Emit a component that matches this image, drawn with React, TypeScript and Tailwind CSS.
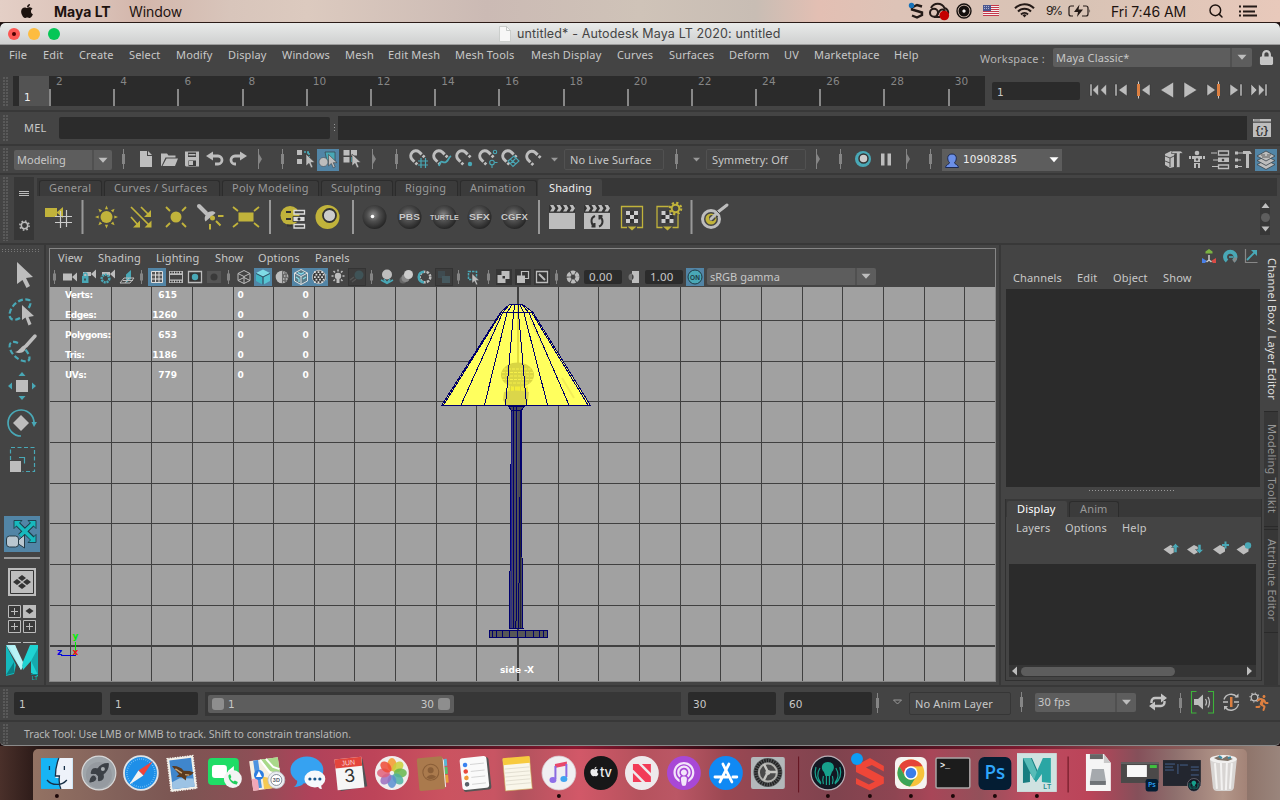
import React from "react";
import { FaApple, FaLock, FaPodcast, FaRunning } from "react-icons/fa";
import { Search, Repeat, Rocket } from "lucide-react";

const G = "#bdbdbd";
const T = "#49a8b6";
const Y = "#c1b33b";

type IcProps = { x: number; w: number; y?: number; h?: number; cls?: string; children?: React.ReactNode };
function Ic({ x, w, y = 0, h = 27, cls = "", children }: IcProps) {
  return (
    <svg className={"shrink-0 " + cls} width={w} height={h} viewBox={`${x} ${y} ${w} ${h}`}>
      {children}
    </svg>
  );
}

/* toolbar icon, origin at its own centre */
function C({ w, h = 27, dx = 0, dy = 0, cls = "", children }: { w: number; h?: number; dx?: number; dy?: number; cls?: string; children?: React.ReactNode }) {
  return (
    <svg className={"shrink-0 " + cls} width={w} height={h} viewBox={`${-w / 2 - dx} ${-h / 2 - dy} ${w} ${h}`}>
      {children}
    </svg>
  );
}

const Bar = ({ x, cy, r = 10 }: { x: number; cy: number; r?: number }) => (
  <g fill="#858585">
    <rect x={x - 0.5} y={cy - r} width={1} height={r * 2} />
    <rect x={x - 1.5} y={cy - r / 2} width={3} height={r} />
  </g>
);
const Fold = ({ x, cy }: { x: number; cy: number }) => (
  <g fill="#858585">
    <rect x={x} y={cy - 10} width={1} height={20} />
    <path d={`M${x + 1} ${cy - 5}l3 5l-3 5z`} />
  </g>
);
const Down = ({ x, y, s = 4.5, c = G }: { x: number; y: number; s?: number; c?: string }) => (
  <path d={`M${x - s} ${y - s / 2}h${s * 2}l${-s} ${s * 1.1}z`} fill={c} />
);
const Cursor = ({ x, y, s = 1 }: { x: number; y: number; s?: number }) => (
  <path transform={`translate(${x} ${y}) scale(${s})`} d="M0 0v12l3-2.6l2 4.6l2-1l-2-4.4h4z" fill={G} stroke="#3a3a3a" strokeWidth={0.6} />
);
const Magnet = ({ x, y }: { x: number; y: number }) => (
  <g transform={`translate(${x + 0.8} ${y + 1}) scale(1.3)`} fill="none" stroke={G} strokeWidth={2.3}>
    <path d="M-3 1.7L-5 -.3A4 4 0 0 1 .6 -5.9L2.6 -3.9" />
    <path d="M-2.2 2.5L-.8 3.9M3.4 -3.1L4.8 -1.7" strokeWidth={2.2} />
  </g>
);
const Grip = ({ cls }: { cls: string }) => (
  <div className={"ml-[3px] w-[6px] shrink-0 bg-[radial-gradient(circle_at_1px_1px,#8a8a8a_0.5px,transparent_0.8px)] bg-[length:3px_3px] " + cls} />
);
const Rule = () => <div className="h-[2px] shrink-0 bg-[#383838]" />;

const menus: [string, string][] = [
  ["File", "w-[34px]"], ["Edit", "w-[36px]"], ["Create", "w-[50px]"], ["Select", "w-[47px]"], ["Modify", "w-[52px]"],
  ["Display", "w-[54px]"], ["Windows", "w-[63px]"], ["Mesh", "w-[43px]"], ["Edit Mesh", "w-[67px]"], ["Mesh Tools", "w-[76px]"],
  ["Mesh Display", "w-[86px]"], ["Curves", "w-[52px]"], ["Surfaces", "w-[60px]"], ["Deform", "w-[55px]"], ["UV", "w-[30px]"],
  ["Marketplace", "w-[80px]"], ["Help", "w-[86px]"],
];

function MacBar() {
  return (
    <div className="flex h-[22px] shrink-0 items-center bg-[linear-gradient(90deg,#e4cfc6_0,#d9c0b6_8%,#d3b6ab_11%,#d8c5bb_18%,#dccabf_24%,#cbbab4_38%,#cfc3b8_50%,#c8bdb4_59%,#e3bfb3_64%,#ddc3b7_70%,#d8c3b5_84%,#e8c9bb_100%)] font-['Inter'] text-[14px] text-[#1d130f]">
      <FaApple className="ml-[20px] w-[14px] shrink-0" size={16} />
      <span className="ml-[20px] w-[75px] text-[14px] font-bold">Maya LT</span>
      <span className="w-[772px] text-[14px] tracking-[-0.1px]">Window</span>
      <Ic x={901} w={72} y={0} h={22}>
        <path d="M922 6.500l-5-1.500l-5 2.500v2l10 3v2.500l-5 2.500l-5-2" fill="none" stroke="#241a17" strokeWidth={2.400} />
        <circle cx={911.500} cy={5.500} r={2.700} fill="#1671b8" />
        <g fill="none" stroke="#241a17" strokeWidth={2}>
          <circle cx={934} cy={12.800} r={4} />
          <path d="M931 8a7.500 7.500 0 0 1 13.500 0a5 5 0 0 1 3.500 6.500M934 17h6M937 15l2.500-4c2.500-3 6-1 5.500 2" />
        </g>
        <circle cx={944.300} cy={15.500} r={4.800} fill="#c40000" />
        <circle cx={964} cy={11} r={7} fill="none" stroke="#15100e" strokeWidth={1.400} />
        <circle cx={964} cy={11} r={3.500} fill="none" stroke="#15100e" strokeWidth={4} />
        <circle cx={964} cy={11} r={1.500} fill="#eee" />
      </Ic>
      <Ic x={973} w={118} y={0} h={22}>
        <rect x={983} y={5} width={16} height={11} fill="#f4eeee" />
        {[5, 7, 9, 11, 13, 15].map((y) => <rect key={y} x={983} y={y} width={16} height={1} fill="#c4384a" />)}
        <rect x={983} y={5} width={8} height={6} fill="#4a5690" />
        <path d="M984 6.500h6M984 8.500h6" stroke="#d6d8e8" strokeWidth={0.7} strokeDasharray="1 1" />
        <g fill="none" stroke="#241a17" strokeWidth={2}>
          <path d="M1015 8.300a13 13 0 0 1 19 0M1018 11.500a9 9 0 0 1 13 0M1021 14.500a5 5 0 0 1 7 0" />
        </g>
        <path d="M1022.500 15.200a3 3 0 0 1 4 0l-2 2.300z" fill="#241a17" />
        <text x={1046} y={15} fontSize={12} fill="#241a17" fontFamily="Inter" textLength={17}>9%</text>
        <path d="M1074 6h-3a2 2 0 0 0-2 2v6a2 2 0 0 0 2 2h2M1083 6h3a2 2 0 0 1 2 2v6a2 2 0 0 1-2 2h-4" fill="none" stroke="#241a17" strokeWidth={1.200} />
        <path d="M1079.500 4.500l-5.500 7.500h4l-1 5l6-7.500h-4.500zM1089.500 9v4q1.300-2 0-4z" fill="#241a17" />
      </Ic>
      <span className="ml-[20px] w-[97px] whitespace-nowrap text-[14px] tracking-[-0.1px]">Fri 7:46 AM</span>
      <Search size={16} className="shrink-0" strokeWidth={2.200} />
      <Ic x={1224} w={40} y={0} h={22}>
        <path d="M1243 6.500h14M1243 11.500h12M1243 15.500h14" stroke="#241a17" strokeWidth={2} />
        <path d="M1239 6.500h2M1239 11.500h2M1239 15.500h2" stroke="#241a17" strokeWidth={2} />
      </Ic>
    </div>
  );
}

function TitleBar() {
  return (
    <div className="flex h-[22px] shrink-0 items-center rounded-t-[5px] border-b border-[#9b9b9b] bg-[linear-gradient(#e9ebea,#cfd0d0)]">
      <Ic x={0} w={497} y={23} h={22}>
        <circle cx={14} cy={34} r={6} fill="#fc5753" /><circle cx={14} cy={34} r={2} fill="#4d0000" />
        <circle cx={34} cy={34} r={6} fill="#fdbc40" />
        <circle cx={54} cy={34} r={6} fill="#05c656" />
      </Ic>
      <Ic x={497} w={20} y={23} h={22}>
        <path d="M499.500 26.500h7l4 4v11h-11z" fill="#f7f7f7" stroke="#c3c6c4" strokeWidth={0.8} />
        <path d="M506.500 26.500v4h4" fill="none" stroke="#b9bcba" strokeWidth={0.8} />
      </Ic>
      <span className="whitespace-nowrap pt-[2px] font-['Inter'] text-[12.5px] tracking-[0.14px] text-[#444]">untitled* - Autodesk Maya LT 2020: untitled</span>
    </div>
  );
}

function MenuRow() {
  return (
    <div className="flex h-[31px] shrink-0 items-start pl-[9px]">
      {menus.map(([m, w]) => (
        <span key={m} className={"shrink-0 whitespace-nowrap pt-[2px] leading-[16px] " + w}>{m}</span>
      ))}
      <span className="mt-[6px] w-[73px] shrink-0 whitespace-nowrap leading-[16px] tracking-[0.2px] text-[#b5b5b5]">Workspace :</span>
      <div className="mt-[3px] flex h-[19px] w-[199px] shrink-0 items-center rounded-[2px] bg-[#5d5d5d] pl-[3px]">
        <span className="w-[174px] pt-[1px]">Maya Classic*</span>
        <div className="h-full w-[2px] bg-[#505050]" />
        <C w={20} h={19}><Down x={0} y={-0.500} /></C>
      </div>
      <FaLock className="ml-[7px] mt-[5px] shrink-0 text-[#c6c6c6]" size={15} />
    </div>
  );
}

const tick = (
  <div className="h-[17px] w-[2px] shrink-0 bg-[#888]" />
);
const tickText = "mb-[17px] ml-[5px] font-['DejaVu_Sans'] text-[10.5px] leading-[16px] text-[#868686]";

function TimeRow() {
  return (
    <div className="flex h-[34px] shrink-0">
      <Grip cls="my-[1px] h-[30px]" />
      <div className="ml-[4px] flex h-[30px] w-[972px] shrink-0 bg-[#2b2b2b]">
        <div className="ml-[6px] flex w-[30px] shrink-0 items-end bg-[#535353] pl-[5px] font-['DejaVu_Sans'] text-[10.5px] text-[#eee]">1</div>
        {[2, 4, 6, 8, 10, 12, 14, 16, 18, 20, 22, 24, 26, 28].map((n) => (
          <div key={n} className="flex w-[64.2px] shrink-0 items-end">
            {tick}
            <span className={tickText}>{n}</span>
          </div>
        ))}
        <div className="flex w-[36px] shrink-0 items-end">
          {tick}
          <span className={tickText}>30</span>
        </div>
      </div>
      <div className="ml-[7px] mt-[6px] flex h-[18px] w-[88px] shrink-0 items-center rounded-[2px] bg-[#2b2b2b] pl-[5px] pt-[3px] font-['DejaVu_Sans'] text-[10.5px]">1</div>
      <Ic x={1080} w={194} y={76} h={30}>
        <g fill={G} stroke="#333" strokeWidth={0.500}>
          <path d="M1090 84h2v12h-2zM1098.500 84v12l-6-6zM1106.500 84v12l-6-6z" />
          <path d="M1115 84h2v12h-2zM1127 84v12l-8.500-6z" />
          <path d="M1150 84v12l-8.500-6z" />
          <path d="M1173.500 82v16l-13-8z" />
          <path d="M1184 82v16l13-8z" />
          <path d="M1207 84v12l8.500-6z" />
          <path d="M1230 84v12l8.500-6zM1240 84h2v12h-2z" />
          <path d="M1251 84v12l6-6zM1258.500 84v12l6-6zM1265 84h2v12h-2z" />
        </g>
        <path d="M1138.500 81.500v17M1218.500 81.500v17" stroke="#ccc" strokeWidth={1} />
        <path d="M1137 84h3v12h-3zM1217 84h3v12h-3z" fill="#dc7f40" />
      </Ic>
    </div>
  );
}

function MelRow() {
  return (
    <div className="flex h-[32px] shrink-0 items-center">
      <Grip cls="h-[27px]" />
      <span className="ml-[15px] w-[35px]">MEL</span>
      <div className="h-[22px] w-[271px] shrink-0 rounded-[2px] bg-[#2b2b2b]" />
      <C w={8} h={22}><path d="M.5-4v8" stroke="#999" strokeDasharray="1 2" /></C>
      <div className="h-[24px] w-[909px] shrink-0 bg-[#2b2b2b]" />
      <Ic x={1247} w={30} y={112} h={32}>
        <path d="M1253 119h18v2.500h-18zM1253 122.800h18V137h-18z" fill={G} />
        <path d="M1254.500 120h5" stroke="#333" strokeDasharray="1 1" />
        <text x={1262} y={133.500} fontSize={10} fontWeight={700} textAnchor="middle" fill="#333" fontFamily="Liberation Mono" textLength={14}>{"{;}"}</text>
      </Ic>
    </div>
  );
}

function StatusRow() {
  const y = 146;
  return (
    <div className="flex h-[27px] shrink-0 items-center">
      <Grip cls="h-[23px]" />
      <div className="ml-[5px] flex h-[20px] w-[98px] shrink-0 items-center rounded-[2px] bg-[#5d5d5d] pl-[3px] pt-[1px]">
        <span className="w-[75px] tracking-normal">Modeling</span>
        <div className="-mt-[1px] h-[20px] w-[2px] bg-[#505050]" />
        <C w={18} h={20}><Down x={0} y={0} /></C>
      </div>
      <Ic x={112} w={24} y={y}><Bar x={123.500} cy={159} /></Ic>
      <Ic x={136} w={20} y={y}><path d="M140 151h7v5h5v11h-12zM148 151l4 4h-4z" fill={G} /></Ic>
      <Ic x={156} w={25} y={y}><path d="M161 166v-12.500h6l1.500 2h7v2h-10l-4 8.500zM162.500 166l4-7.500h11.500l-3 7.500z" fill={G} /></Ic>
      <Ic x={181} w={21} y={y}>
        <path d="M185 151.500h14v15h-13l-1-1z" fill={G} />
        <path d="M188 152.500h8v4.500h-8zM188.500 160.500h7.500v5.500h-7.500z" fill="#3d3d3d" /><path d="M189 161h4v4h-4z" fill={G} /><path d="M188.500 154h7v1.500h-7z" fill={G} />
      </Ic>
      <Ic x={202} w={24} y={y}><path d="M212 156h6a3.500 3.500 0 0 1 0 8h-3" fill="none" stroke={G} strokeWidth={2.800} /><path d="M206 156l7-4.500v9z" fill={G} /></Ic>
      <Ic x={226} w={26} y={y}><path d="M241 156h-6a3.500 3.500 0 0 0 0 8h1" fill="none" stroke={G} strokeWidth={2.800} /><path d="M247 156l-7-4.500v9z" fill={G} /></Ic>
      <Ic x={252} w={42} y={y}><Fold x={258} cy={159} /><Bar x={282.500} cy={159} /></Ic>
      <Ic x={294} w={23} y={y}>
        <path d="M297 150h5v5h-5zM297 159h5v5h-5z" fill={G} /><path d="M304 152h5v5h2M309 153h-3" fill="none" stroke={T} strokeWidth={1.500} strokeDasharray="2 1" /><Cursor x={306} y={154} />
      </Ic>
      <div className="h-[22px] w-[22px] shrink-0 bg-[#5285a6]">
        <Ic x={317} w={22} y={148} h={22}>
          <path d="M325 151h10v9h-8z" fill={T} stroke="#333" strokeWidth={0.600} /><circle cx={323.500} cy={161} r={4.500} fill={G} stroke="#3a4a55" strokeWidth={0.600} /><Cursor x={328.500} y={153.500} s={0.950} />
        </Ic>
      </div>
      <Ic x={339} w={25} y={y}>
        <path d="M343.500 150h6v5.500h-6zM351 150h6v5.500h-6zM343.500 157h6v5.500h-6z" fill={G} /><path d="M351 157h4v5h-4z" fill={T} /><Cursor x={352} y={154} />
      </Ic>
      <Ic x={364} w={44} y={y}><Fold x={372} cy={159} /><Bar x={396.500} cy={159} /></Ic>
      <Ic x={408} w={23} y={y}><Magnet x={417.500} y={158.500} /><path d="M421 158v10M425.500 158v10M418 161h10M418 165h10" stroke={T} strokeWidth={1.200} /></Ic>
      <Ic x={431} w={23} y={y}><Magnet x={440.500} y={158.500} /><path d="M439 166c2-8 4-2 7-4c3-2 2-4 5-6" fill="none" stroke={T} strokeWidth={1.800} /></Ic>
      <Ic x={454} w={22} y={y}><Magnet x={463.500} y={158.500} /><circle cx={470} cy={164} r={2.200} fill={T} /></Ic>
      <Ic x={476} w={24} y={y}><Magnet x={486.500} y={158.500} /><g fill="none" stroke={T} strokeWidth={1.100}><circle cx={495} cy={152} r={1.700} /><circle cx={492} cy={162.500} r={2.300} /><path d="M492 165v3M494.500 162.500h3" /></g></Ic>
      <Ic x={500} w={23} y={y}><Magnet x={509.500} y={158.500} /><path d="M508 161l6-5l5 5l-6 5.500zM510 159l6 5M516 158l-6 6" fill="none" stroke={T} strokeWidth={1.100} /></Ic>
      <Ic x={523} w={41} y={y}><Magnet x={533.500} y={159} /><Down x={554.500} y={159.500} s={3.500} c="#999" /></Ic>
      <div className="flex h-[21px] w-[100px] shrink-0 items-center rounded-[2px] border border-[#515151] pl-[5px] pt-[1px] tracking-[0.1px]">No Live Surface</div>
      <Ic x={664} w={42} y={y}><Bar x={676.500} cy={159} /><Down x={696.500} y={159.500} s={3.500} c="#999" /></Ic>
      <div className="flex h-[21px] w-[100px] shrink-0 items-center rounded-[2px] border border-[#515151] pl-[5px] pt-[1px] tracking-[0.1px]">Symmetry: Off</div>
      <Ic x={806} w={46} y={y}><Fold x={816} cy={159} /><Bar x={840.500} cy={159} /></Ic>
      <Ic x={852} w={23} y={y}><circle cx={863} cy={159} r={8} fill={T} /><circle cx={863.500} cy={158.500} r={4.500} fill="#ccc" stroke="#333" strokeWidth={1.500} /></Ic>
      <Ic x={875} w={24} y={y}><path d="M881 153.500h3.500v12h-3.500zM887.500 153.500h3.500v12h-3.500z" fill={G} /></Ic>
      <Ic x={899} w={43} y={y}><Fold x={906} cy={159} /><Bar x={930.500} cy={159} /></Ic>
      <div className="flex h-[22px] w-[120px] shrink-0 items-center bg-[#5d5d5d]">
        <C w={20} h={22}>
          <path d="M-6.500 7.500c0-3 4-3 4-5c-2.500-2-3-8.500 2.500-8.500s5 6.500 2.500 8.500c0 2 4 2 4 5z" fill="#6b8fe8" stroke="#1c2a52" strokeWidth={1} />
        </C>
        <span className="w-[82px] pl-[1px] font-['DejaVu_Sans'] text-[10.5px] tracking-[0.1px] text-[#eee]">10908285</span>
        <C w={18} h={22} dx={1}><Down x={0} y={-0.500} c="#fff" /></C>
      </div>
      <Ic x={1062} w={124} y={y}>
        <path d="M1165 154l6-3h6l-3 4v12l-4 1l-5-3z" fill={G} /><path d="M1165 156l5 2v9M1170 158l4-2M1165 161l5 2" fill="none" stroke="#444" strokeWidth={0.900} />
        <path d="M1172 151h9l2 2.500h-3v14h-3.500v-14h-5z" fill={G} stroke="#444" strokeWidth={0.700} />
      </Ic>
      <Ic x={1186} w={23} y={y}>
        <circle cx={1197} cy={153} r={2.300} fill={G} /><path d="M1189 156h16v3h-5v9h-2v-4h-2v4h-2v-9h-5z" fill={G} /><path d="M1191.500 156v3M1202.500 156v3M1194 162.500h6" stroke="#444" /><circle cx={1197} cy={159.500} r={1.200} fill="#444" />
      </Ic>
      <Ic x={1209} w={23} y={y}>
        <path d="M1211 153h6M1213 160h5M1212 166.500h6" stroke={G} strokeWidth={1.200} /><path d="M1218.500 151h10v4h-10zM1218.500 165h10v3.500h-10z" fill="none" stroke={G} strokeWidth={1.300} /><path d="M1218 157.500h11v4.500h-11z" fill={G} /><circle cx={1223} cy={160} r={1.300} fill="#444" />
      </Ic>
      <Ic x={1232} w={23} y={y}>
        <path d="M1237 153h6M1237 160h4M1237 166.500h5" stroke={G} strokeWidth={1.200} /><path d="M1235 151.500h3v3h-3zM1235 158.500h3v3h-3zM1235 165h3v3h-3z" fill={G} /><path d="M1243 151h7l2 3h-3v14h-3v-14h-3z" fill={G} />
      </Ic>
      <div className="mt-[1px] h-[22px] w-[22px] shrink-0 bg-[#5285a6]">
        <Ic x={1255} w={22} y={149} h={22}>
          <g fill={G} stroke="#38424a" strokeWidth={0.800}>
            <path d="M1266 160l9 4.500l-9 5l-9-5z" /><path d="M1266 156l9 4.500l-9 5l-9-5z" /><path d="M1266 151l9 5l-9 5l-9-5z" />
          </g>
          <path d="M1261 155h4M1267 155h4M1262 157h8" stroke="#444" strokeWidth={0.800} />
        </Ic>
      </div>
    </div>
  );
}

const tabs: [string, string][] = [
  ["General", "ml-[2px] w-[63px] pl-[9px]"], ["Curves / Surfaces", "ml-[2px] w-[116px] pl-[9px]"], ["Poly Modeling", "ml-[2px] w-[97px] pl-[9px]"],
  ["Sculpting", "ml-[2px] w-[72px] pl-[9px]"], ["Rigging", "ml-[2px] w-[63px] pl-[9px]"], ["Animation", "ml-[2px] w-[77px] pl-[9px]"],
];

const Sphere = ({ label, size = 9.500, len = 21 }: { label?: string; size?: number; len?: number }) => (
  <C w={35} h={44} dx={-1}>
    <defs>
      <radialGradient id="ball" cx="0.45" cy="0.42" r="0.6">
        <stop offset="0" stopColor="#8a8a8a" /><stop offset="0.45" stopColor="#4e4e4e" /><stop offset="1" stopColor="#232323" />
      </radialGradient>
    </defs>
    <circle r={12} cy={0} fill="url(#ball)" />
    {label ? (
      <text x={0} y={3} textAnchor="middle" fontSize={size} textLength={len} lengthAdjust="spacingAndGlyphs" fontWeight={700} fontFamily="Liberation Sans" fill="#c9c9c9" stroke="#333" strokeWidth={0.300} paintOrder="stroke">{label}</text>
    ) : (
      <circle cx={-2} cy={-0.500} r={1.800} fill="#fff" />
    )}
  </C>
);
const ShelfBar = ({ w }: { w: number }) => <C w={w} h={44}><rect x={-1} y={-17} width={2} height={34} fill="#999" /></C>;
const Clap = ({ loop = false }: { loop?: boolean }) => (
  <C w={35} h={44} dx={-0.500}>
    <path d="M-13-4h26v16h-26z" fill={G} />
    <path d="M-13-12h26v7h-26z" fill="#333" />
    {[-12, -5.500, 1, 7.500].map((a) => <path key={a} d={`M${a}-12h3.500l2 3.200l-2 3.200h-3.500l2-3.200z`} fill={G} />)}
    {loop && <path d="M-2-1c-5 2-4 8-1 10M-5.500 9.500h3v-3.500M2 9.500c5-2 4-8 1-10M5.500-1h-3v3.500" fill="none" stroke="#333" strokeWidth={2} />}
  </C>
);
const Checker = ({ w, gear = false }: { w: number; gear?: boolean }) => (
  <C w={w} h={44} dx={-0.500}>
    <path d="M-5 10.500h-5.500v-21h21v21h-5.500" fill="none" stroke={Y} strokeWidth={1.300} />
    <path d="M-6-6h12v12h-12z" fill="#333" />
    <path d="M-6-6h4v4h-4zM2-6h4v4h-4zM-2-2h4v4h-4zM-6 2h4v4h-4zM2 2h4v4h-4z" fill="#ccc" />
    <path d="M-4.500 9.500h9l-4.500 4z" fill={Y} />
    {gear && (
      <g>
        <circle cx={8} cy={-8.500} r={7} fill="#444" /><circle cx={8} cy={-8.500} r={5.600} fill="none" stroke={Y} strokeWidth={2.400} strokeDasharray="2.200 2.200" />
        <circle cx={8} cy={-8.500} r={3.800} fill="#444" stroke={Y} strokeWidth={2} />
      </g>
    )}
  </C>
);
const rays = [0, 45, 90, 135, 180, 225, 270, 315];

function Shelf() {
  return (
    <div className="flex h-[68px] shrink-0">
      <Grip cls="mt-[2px] h-[64px]" />
      <div className="ml-[5px] mt-[2px] h-[63px] w-[20px] shrink-0 bg-[#373737]">
        <Ic x={14} w={20} y={177} h={63}>
          <path d="M19 191.500h10M19 193.500h10M19 195.500h10" stroke="#bbb" strokeWidth={1} />
          <circle cx={24.500} cy={225.500} r={3.200} fill="none" stroke="#bbb" strokeWidth={1.500} />
          <circle cx={24.500} cy={225.500} r={4.600} fill="none" stroke="#bbb" strokeWidth={1.600} strokeDasharray="1.600 2" />
        </Ic>
      </div>
      <div className="ml-[3px] flex w-[1240px] shrink-0 flex-col pt-[3px]">
        <div className="flex h-[18px] items-end bg-[#373737] tracking-[0.25px] text-[#999]">
          {tabs.map(([t, c]) => (
            <div key={t} className={"h-[16px] shrink-0 whitespace-nowrap rounded-t-[3px] border border-b-0 border-[#2c2c2c] bg-[#3b3b3b] leading-[14px] " + c}>{t}</div>
          ))}
          <div className="ml-[1px] h-[17px] w-[64px] shrink-0 rounded-t-[2px] bg-[#444] pl-[11px] leading-[17px] tracking-[0.1px] text-[#eee]">Shading</div>
        </div>
        <div className="-mt-[1px] flex h-[44px]">
          <Ic x={37} w={35} y={195} h={44}>
            <path d="M45 208h12v9h-12zM57 212l6-5v11l-6-5z" fill={Y} />
            <path d="M60.500 211v17M66.500 210v17M55 216.500h17M55 222.500h17" stroke="#ccc" strokeWidth={1.200} />
          </Ic>
          <ShelfBar w={21} />
          <C w={27} h={44}><circle r={6} fill={Y} cy={0} />{rays.map((a) => <path key={a} transform={`rotate(${a})`} d="M-1.600-7.800h3.200L0-11.500z" fill={Y} />)}</C>
          <C w={35} h={44}><g transform="translate(3.500 0)"><path d="M0-10L8-2M-10-10L9 9M-10 0L-3 8" stroke={Y} strokeWidth={1.700} /><path d="M10-7v7h-7zM10.500 3.500v7h-7zM-1 3.500v7h-7z" fill={Y} /></g></C>
          <C w={35} h={44}><g transform="translate(3.500 0)"><circle r={5.500} fill={Y} /><path d="M-10-10l4 4M10-10l-4 4M-10 10l4-4M10 10l-4-4" stroke={Y} strokeWidth={1.800} /></g></C>
          <C w={35} h={44}><g transform="translate(2.500 0)"><path d="M-11-11l7 7" stroke={G} strokeWidth={4} strokeLinecap="round" /><path d="M-4.500 4.500c-2-3 0-8 3-9.500s6-1 7 1z" fill={G} /><circle cx={2.500} cy={1} r={2.500} fill={Y} /><path d="M8-1h5.500M6 4l4.500 4.500M0 7v5.500" stroke={Y} strokeWidth={2} /></g></C>
          <C w={35} h={44}><g transform="translate(3.500 0)"><path d="M-7.500-4.500h15v9h-15z" fill={Y} /><path d="M-13-10l5 4M13-10l-5 4M-13 10l5-4M13 10l-5-4" stroke={Y} strokeWidth={1.800} /></g></C>
          <ShelfBar w={20} />
          <C w={26} h={44}><circle cx={-3} cy={-1.500} r={9.500} fill={Y} /><path d="M-7-5h5M-7 2h5M-6 8.500h5" stroke="#333" strokeWidth={2} /><path d="M1-6.500h10.500v3.500h-10.500zM1 7.500h10.500v3.500h-10.500z" fill="#444" stroke="#ddd" strokeWidth={1.300} /><path d="M0-.5h12v5h-12z" fill="#ddd" stroke="#333" strokeWidth={0.800} /><circle cx={6} cy={2} r={1.500} fill="#333" /></C>
          <C w={42} h={44}><circle r={12} cx={0.500} fill={Y} /><circle cx={2.500} cy={-1.500} r={6.500} fill="#ccc" stroke="#333" strokeWidth={1.800} /></C>
          <ShelfBar w={10} />
          <Sphere /><Sphere label="PBS" /><Sphere label="TURTLE" size={8} len={29} /><Sphere label="SFX" /><Sphere label="CGFX" len={27} />
          <ShelfBar w={12} />
          <Clap /><Clap loop />
          <Checker w={35} /><Checker w={36} gear />
          <ShelfBar w={11} />
          <C w={36} h={44} dx={-1}>
            <circle cx={-3} cy={2} r={10} fill={G} /><circle cx={-3} cy={2} r={7} fill="#444" /><circle cx={-3} cy={2} r={5.500} fill={Y} /><circle cx={-2} cy={1} r={3} fill="#444" /><path d="M-3 2L4-5L13-12" stroke={G} strokeWidth={3} strokeLinecap="round" /><path d="M3-6l3 3M-2 4l6-5" stroke="#444" strokeWidth={1} />
          </C>
          <Ic x={733} w={537} y={195} h={44}>
            <path d="M1260 200h10v35h-10z" fill="#373737" /><path d="M1261.500 208l4-5l4 5zM1261.500 226.500l4 5l4-5z" fill={G} /><circle cx={1265.500} cy={217.500} r={4.500} fill="#5d5d5d" />
          </Ic>
        </div>
      </div>
    </div>
  );
}

function Tools() {
  return (
    <div className="flex w-[44px] shrink-0 flex-col">
      <Ic x={0} w={44} y={245} h={12}><path d="M2 249.500h38M2 251.500h38" stroke="#777" strokeDasharray="1 2" /></Ic>
      <Ic x={0} w={44} y={257} h={36}><path d="M17 262v22l5.500-4l4 8l3.500-2l-4-8l7-1z" fill={G} /></Ic>
      <Ic x={0} w={44} y={293} h={37}>
        <path d="M20 318c-7 4-12 1-10-6c2-8 12-15 19-12c3 2 1 6-1 9" fill="none" stroke={T} strokeWidth={2.200} strokeDasharray="5 2.500" /><path d="M22 305v15l3.500-2.500l3 8l3-1.500l-3-7l5.500-1z" fill={G} />
      </Ic>
      <Ic x={0} w={44} y={330} h={37}>
        <path d="M18 343c-6-3-10 0-8 6c3 8 12 14 18 12c4-3-1-10-4-13" fill="none" stroke={T} strokeWidth={2.200} strokeDasharray="5 2.500" /><path d="M35 336l-9 10" stroke={G} strokeWidth={3.500} strokeLinecap="round" /><path d="M26 345c1 6-5 10-11 7c5-1 6-7 11-7z" fill={G} />
      </Ic>
      <Ic x={0} w={44} y={367} h={37}>
        <path d="M16 380h12v12h-12z" fill={G} /><path d="M18.500 376h7l-3.500-4zM18.500 396h7l-3.500 4zM12 382.500v7l-4-3.500zM32 382.500v7l4-3.500z" fill={T} />
      </Ic>
      <Ic x={0} w={44} y={404} h={38}>
        <path d="M21 436a13 13 0 1 1 13-12" fill="none" stroke={T} strokeWidth={1.700} /><path d="M31.500 422h5.500l-3 5z" fill={T} /><path d="M21 415l8 8l-8 8l-8-8z" fill={G} />
      </Ic>
      <Ic x={0} w={44} y={442} h={74}>
        <path d="M10.500 460v-12.500h24v24h-12" fill="none" stroke={T} strokeWidth={1.200} strokeDasharray="4 2.500" /><path d="M10 461h11v11h-11z" fill={G} /><path d="M19 457.500h5.500v6" fill="none" stroke={T} strokeWidth={1.200} />
      </Ic>
      <div className="ml-[4px] h-[36px] w-[36px] shrink-0 bg-[#5285a6]">
        <Ic x={4} w={36} y={516} h={36}>
          <path d="M17.500 524l15 14.500M32.500 524L20 536" stroke="#1d3c48" strokeWidth={5.500} />
          <path d="M14 520.500h8l-8 8zM36 520.500h-8l8 8zM36 542.500v-8l-8 8z" fill="#17b9bd" stroke="#1d3c48" strokeWidth={0.900} />
          <path d="M16.500 523l16.500 16.500M33.500 523L20 536" stroke="#17b9bd" strokeWidth={3.600} />
          <rect x={6.500} y={536} width={12} height={11} rx={3} fill="#b9c7d0" stroke="#263c48" /><path d="M18.500 540l6-5v13l-6-4z" fill="#b9c7d0" stroke="#263c48" />
        </Ic>
      </div>
      <div className="ml-[4px] mt-[5px] h-[2px] w-[36px] shrink-0 bg-[#9a9a9a]" />
      <Ic x={0} w={44} y={559} h={43}>
        <path d="M8 568h28v28h-28z" fill={G} /><path d="M10.500 570.500h23v23h-23z" fill={G} stroke="#333" />
        <path d="M22 575l4 3l-4 3l-4-3zM22 583l4 3l-4 3l-4-3zM17 579l4 3l-4 3l-4-3zM27 579l4 3l-4 3l-4-3z" fill="#333" />
      </Ic>
      <Ic x={0} w={44} y={602} h={43}>
        <g fill="#3a3a3a" stroke="#bbb"><path d="M8.500 605.500h12v12h-12zM8.500 620.500h12v12h-12zM23.500 620.500h12v12h-12z" /><path d="M11 611.500h7M14.500 608v7M11 626.500h7M14.500 623v7M26 626.500h7M29.500 623v7M8 642.500h13M23 642.500h13" /></g>
        <path d="M23 605h13v13h-13z" fill={G} /><path d="M29.500 608l4 3l-4 3l-4-3z" fill="#333" />
      </Ic>
      <Ic x={0} w={44} y={645} h={38}>
        <path d="M6 645h9l8 22l-2 3z" fill="#9fe9f0" /><path d="M6 645l10 20l-2 9l-8 2z" fill="#15b9bd" /><path d="M6 675l8-13v11z" fill="#0c8085" />
        <path d="M38 645h-8l-8 19l1 6l8-9v12l7 3z" fill="#1fd3d3" /><path d="M15 645l8 17l-2 8l-12-24z" fill="#b8f3f6" /><path d="M31 661l7-13v27z" fill="#15a9ad" /><path d="M31 674h7v1h-7z" fill="#0c8085" />
        <text x={32} y={679.500} fontSize={5} fill="#1aa" fontFamily="Liberation Sans" fontWeight={700}>LT</text>
      </Ic>
    </div>
  );
}

const vlines = Array.from({ length: 23 }, (_, k) => Math.floor(70.4 + 40.65 * k));
const hlines = Array.from({ length: 8 }, (_, k) => Math.floor(320.6 + 40.65 * k));
const stats: [string, string][] = [["Verts:", "615"], ["Edges:", "1260"], ["Polygons:", "653"], ["Tris:", "1186"], ["UVs:", "779"]];
const NAVY = "#00006c";

function Scene() {
  return (
    <svg className="block" width={945} height={394} viewBox="50 287 945 394">
      <rect x={50} y={287} width={945} height={394} fill="#a1a1a1" />
      <g fill="#404040">
        {vlines.map((x) => <rect key={x} x={x} y={287} width={1} height={394} />)}
        {hlines.map((y) => <rect key={y} x={50} y={y} width={945} height={1} />)}
        <rect x={50} y={645} width={945} height={2} />
        <rect x={517} y={287} width={2} height={394} />
      </g>
      <path d="M509.500 304.500h13l10.500 8l57.500 93h-149l59-93z" fill="#ffff5e" />
      <path d="M518 305v58" stroke="#e0da3c" strokeWidth={1.800} />
      <path d="M500 318l-15 28M529 318l16 32M458 380l-8 16M562 378l12 20" stroke="#f3ee58" strokeWidth={2} />
      <ellipse cx={517.500} cy={375} rx={16.500} ry={12.500} fill="#d9d543" />
      <path d="M504 369h27M502 372.500h31M502 376h31M502 379.500h31M505 383h25" stroke="#f6f04a" strokeWidth={1.200} strokeDasharray="3 1" />
      <path d="M508 386.500h20v7h-20z" fill="#f3ec38" /><path d="M510.500 386v7M514.500 386v7M520.500 386v7M524.500 386v7" stroke="#d9d543" />
      <path d="M504 392q12-3 25 0l-1 8l-3 5h-19l-3-5z" fill="#dbd64a" />
      <g fill="none" stroke={NAVY} shapeRendering="crispEdges" strokeWidth={1}>
        <path d="M509.500 304.500h13l10.500 8l57.500 93h-149l59-93z" />
        <path d="M500 312.500h33" />
        <path d="M501 313L443.500 405M532 313L588 405" />
        <path d="M509.500 304.500L502.500 313L461 405M512 304.500L507 313L484.500 405M515 304.500L513.500 313L505.500 405M518 304.500L518.500 313L526.500 405M520 304.500L524 313L547.500 405M522 304.500L529 313L569 405" />
      </g>
      <path d="M509 406h15l-3 5v8l1.500 209h-13l2-209v-8z" fill="#4a4a58" />
      <g fill="none" stroke={NAVY} shapeRendering="crispEdges">
        <path d="M508.500 406h16l-3.500 5l1.500 217h-13l2-217z" />
        <path d="M511.500 410.500h10M514 406l-.5 222M516.500 406l-.5 222M521 411l-2.500 217M509.500 628.500h14" />
      </g>
      <path d="M517.500 412v216" stroke="#555" /><path d="M512 412l-1 216" stroke="#2222a0" strokeWidth={1} /><path d="M520.500 470v158" stroke="#252530" strokeWidth={1} />
      <path d="M489.500 630.500h58v7h-58z" fill="#575757" stroke={NAVY} shapeRendering="crispEdges" />
      <path d="M492.500 630v8M496.500 630v8M502.500 630v8M509.500 630v8M517.500 630v8M525.500 630v8M533.500 630v8M539.500 630v8M543.500 630v8" stroke={NAVY} shapeRendering="crispEdges" />
      <path d="M75.500 642v13" stroke="#00f000" shapeRendering="crispEdges" /><path d="M61 655.500h15" stroke="#0000e0" shapeRendering="crispEdges" />
      <g fontFamily="DejaVu Sans" fontWeight={700} fontSize={9}>
        <text x={72.500} y={639} fill="#00f000">y</text><text x={57} y={654.500} fill="#0000e0">z</text><text x={72.500} y={654.500} fill="#f01010">x</text>
      </g>
    </svg>
  );
}

const BlueIc = ({ x, children }: { x: number; children: React.ReactNode }) => (
  <div className="h-[18px] w-[18px] shrink-0 bg-[#5285a6]"><Ic x={x} w={18} y={268} h={18}>{children}</Ic></div>
);
const DimIc = ({ x, children }: { x: number; children: React.ReactNode }) => (
  <div className="h-[18px] w-[18px] shrink-0 border border-[#343434] bg-[#3d3d3d]"><Ic x={x} w={16} y={269} h={16}>{children}</Ic></div>
);
const Cam = ({ x, y, w = 9, h = 6 }: { x: number; y: number; w?: number; h?: number }) => (
  <path d={`M${x} ${y}h${w}v${h}h${-w}zM${x + w} ${y + h / 2}l5-4.500v9z`} fill={G} />
);

function PanelTools() {
  const p = { y: 267, h: 19 };
  return (
    <div className="flex h-[19px] shrink-0 items-center">
      <Ic x={50} w={10} {...p}><Bar x={54.500} cy={277} r={7} /></Ic>
      <Ic x={60} w={20} {...p}><Cam x={63} y={273.500} w={9} h={7} /></Ic>
      <Ic x={80} w={19} {...p}><Cam x={83} y={272} w={8} h={4} /><path d="M82 276h6.500v7h-6.500z" fill={T} /><path d="M83.500 276v-2q1.800-2 3.500 0v2" fill="none" stroke={T} strokeWidth={1.300} /><path d="M85 278.500v2" stroke="#333" strokeWidth={1.400} /></Ic>
      <Ic x={99} w={19} {...p}><Cam x={102} y={272} w={8} h={4} /><circle cx={105.500} cy={278.500} r={3.800} fill="#444" stroke={T} strokeWidth={2.500} strokeDasharray="2 .8" /></Ic>
      <Ic x={118} w={19} {...p}><path d="M126 274.500l5-4.500v9l-5 4z" fill={T} /><path d="M120 283l4-5h10l-4 5zM123 280.500h10M125 283l4-5" fill="none" stroke={G} /></Ic>
      <Ic x={137} w={11} {...p}><Bar x={141.500} cy={277} r={7} /></Ic>
      <BlueIc x={148}><path d="M151.500 271.500h11v11h-11zM155.500 271.500v11M159 271.500v11M151.500 275h11M151.500 279h11" fill="#555" stroke="#ddd" /></BlueIc>
      <Ic x={166} w={20} {...p}><path d="M169 271h14v12h-14z" fill={G} /><path d="M170 272.500h12M170 281.500h12" stroke="#333" strokeWidth={1.500} strokeDasharray="1.500 1" /><path d="M170 275h12v4.500h-12z" fill="#444" /></Ic>
      <Ic x={186} w={19} {...p}><path d="M188.500 271.500h13v11h-13z" fill="#333" stroke={G} strokeWidth={1.300} /><circle cx={195} cy={277} r={3.200} fill={T} /></Ic>
      <Ic x={205} w={19} {...p}><path d="M207 271h14v12h-14z" fill="#555" /><circle cx={214} cy={277} r={3.500} fill="#3a3a3a" /></Ic>
      <Ic x={224} w={10} {...p}><Bar x={228.500} cy={277} r={7} /></Ic>
      <Ic x={234} w={20} {...p}><path d="M244 270.500l6 3v7l-6 3l-6-3v-7zM238 273.500l6 3l6-3M244 276.500v7M238 280.500l6-3l6 3" fill="none" stroke={G} strokeWidth={1} /></Ic>
      <BlueIc x={254}><path d="M263 269.500l7 3.500l-7 3.500l-7-3.500z" fill="#7fdbe6" /><path d="M256 273.500l6.500 3.500v7.500l-6.500-3.500z" fill="#3fb4c4" /><path d="M270 273.500l-6.500 3.500v7.500l6.500-3.500z" fill="#57c5d3" /><path d="M256 273.500l7 3.500l7-3.500M263 277v7.500" fill="none" stroke="#2b4c5b" strokeWidth={0.900} /></BlueIc>
      <Ic x={272} w={20} {...p}><circle cx={282} cy={277} r={6.300} fill={G} /><path d="M282 271v12a6 6 0 0 0 0-12z" fill="#6a6a6a" /><path d="M283 273h3M284 276h4M283 279h4M283 282h2" stroke={G} strokeWidth={1.400} strokeDasharray="1.400 1.400" /></Ic>
      <BlueIc x={292}><path d="M301 269.500l6.500 3.500v8l-6.500 3.500l-6.500-3.500v-8zM294.500 273l6.500 3.500l6.500-3.500M301 276.500v8" fill="#5a7a88" stroke="#ddd" strokeWidth={1} /><path d="M298 272.500l3 1.500l3-1.500M296 277l3 2v3M303 279l3-2" stroke="#8be0ea" fill="none" strokeWidth={1.200} /></BlueIc>
      <BlueIc x={311}><circle cx={320} cy={277} r={6.700} fill="#3a3a3a" stroke="#ccc" strokeWidth={0.800} />{[271.500, 274, 276.500, 279, 281.500].map((y, i) => <path key={y} d={`M${315 + (i % 2) * 1.500} ${y + 0.600}h${i % 4 === 0 ? 9 : 11}`} stroke="#ddd" strokeWidth={1.800} strokeDasharray="1.800 1.800" />)}</BlueIc>
      <Ic x={329} w={20} {...p}><circle cx={339} cy={276} r={3.200} fill={G} /><path d="M337.500 279h3v4h-3z" fill={G} /><path d="M339 269.500v2M332.500 276h2M343.500 276h2M334.500 271l1.500 1.500M343.500 271l-1.500 1.500M334.500 281l1.500-1.500M343.500 281l-1.500-1.500" stroke={G} strokeWidth={1.500} /></Ic>
      <DimIc x={350}><circle cx={360} cy={275} r={4.500} fill="#3f5357" /><path d="M351 280l4-3M353 282l4-3" stroke="#555" strokeWidth={1.500} /></DimIc>
      <Ic x={367} w={11} {...p}><Bar x={372.500} cy={277} r={7} /></Ic>
      <Ic x={378} w={20} {...p}><circle cx={388} cy={274.500} r={5} fill={G} /><path d="M382 280l6 3.500l6-3.500M385 279l3 4l3-4" fill="none" stroke={T} strokeWidth={1.500} /></Ic>
      <Ic x={398} w={19} {...p}><circle cx={404} cy={280} r={3.500} fill="#666" /><circle cx={406.500} cy={278} r={4} fill="#888" /><circle cx={409.500} cy={274.500} r={4.500} fill="#ccc" /></Ic>
      <Ic x={417} w={19} {...p}><circle cx={426} cy={277} r={5.300} fill="none" stroke={G} strokeWidth={2.500} strokeDasharray="2.500 1.200" /><path d="M425 271.700a5.300 5.300 0 0 0 0 10.600" fill="none" stroke={T} strokeWidth={2.500} /></Ic>
      <DimIc x={437}><path d="M439 271h7v7h-7z" fill="#3f4b50" /><path d="M443 276h8v7h-8z" fill="#46595f" /></DimIc>
      <Ic x={454} w={12} {...p}><Bar x={459.500} cy={277} r={7} /></Ic>
      <Ic x={466} w={19} {...p}><path d="M469.500 271.500h8v8h-8z" fill="none" stroke={T} strokeWidth={1.500} strokeDasharray="2.500 1" /><Cursor x={473} y={273.500} s={0.820} /></Ic>
      <Ic x={485} w={12} {...p}><Bar x={489.500} cy={277} r={7} /></Ic>
      <Ic x={497} w={19} {...p}><path d="M497 269h16v16h-16z" fill="#353535" /><path d="M502.500 271h8v8h-8zM498.500 275h8v8h-8z" fill={G} /><path d="M503.500 276h2.500v2.500h-2.500z" fill="#333" /></Ic>
      <Ic x={516} w={19} {...p}><path d="M516 269h16v16h-16z" fill="#353535" /><path d="M522.500 271.500h7v7h-7z" fill="#353535" stroke={G} strokeWidth={1.200} /><path d="M518 275.500h8v7.500h-8z" fill={G} /></Ic>
      <Ic x={535} w={18} {...p}><path d="M535 269h16v16h-16z" fill="#353535" /><path d="M537.500 271.500h11v11h-11z" fill="none" stroke={G} strokeWidth={1.300} /><path d="M540 274l6 6" stroke={G} strokeWidth={2} /></Ic>
      <Ic x={553} w={11} {...p}><Bar x={557.500} cy={277} r={7} /></Ic>
      <Ic x={564} w={21} {...p}><circle cx={574} cy={277} r={4.500} fill="none" stroke={G} strokeWidth={4} strokeDasharray="3.900 .8" /></Ic>
      <div className="h-[14px] w-[38px] shrink-0 rounded-[2px] bg-[#2b2b2b] pl-[5px] text-[11.5px] leading-[14px]">0.00</div>
      <Ic x={623} w={23} {...p}><path d="M633 271h7v12h-7v-3a3.500 3.500 0 0 0 0-6z" fill={G} /><path d="M633 273.500a3.500 3.500 0 0 0 0 7z" fill="#777" /></Ic>
      <div className="h-[14px] w-[38px] shrink-0 rounded-[2px] bg-[#2b2b2b] pl-[5px] text-[11.5px] leading-[14px]">1.00</div>
      <Ic x={684} w={3} {...p} />
      <BlueIc x={687}><circle cx={696} cy={277} r={7} fill={T} stroke="#1f3a44" strokeWidth={1} /><text x={696} y={279.500} textAnchor="middle" fontSize={6.500} fontWeight={700} fill="#1f3a44" fontFamily="Liberation Sans">ON</text></BlueIc>
      <div className="ml-[3px] flex h-[17px] w-[169px] shrink-0 items-center rounded-[2px] bg-[#5d5d5d] pl-[3px]">
        <span className="w-[145px] pt-[1px] tracking-[0px]">sRGB gamma</span>
        <div className="h-full w-[2px] bg-[#505050]" />
        <C w={18} h={17}><Down x={0} y={-0.500} /></C>
      </div>
    </div>
  );
}

function Viewport() {
  return (
    <div className="ml-[3px] mt-[3px] flex h-[434px] w-[947px] shrink-0 flex-col border border-[#868686]">
      <div className="flex h-[18px] shrink-0 items-center pl-[8px] leading-[18px] tracking-[0.1px]">
        <span className="w-[40px]">View</span><span className="w-[58px]">Shading</span><span className="w-[59px]">Lighting</span><span className="w-[43px]">Show</span><span className="w-[57px]">Options</span><span>Panels</span>
      </div>
      <PanelTools />
      <div className="relative mt-[1px]">
        <Scene />
        <div className="absolute left-[15px] top-[-2px] flex flex-col font-['DejaVu_Sans'] text-[9px] font-bold leading-[20px] text-white">
          {stats.map(([l, n]) => (
            <div key={l} className="flex h-[20px]">
              <span className="w-[62px] tracking-[-0.45px]">{l}</span><span className="w-[50px] text-right tracking-[-0.05px]">{n}</span><span className="w-[67px] text-right">0</span><span className="w-[65px] text-right">0</span>
            </div>
          ))}
        </div>
        <span className="absolute left-[450px] top-[376px] whitespace-nowrap font-['DejaVu_Sans'] text-[9px] font-bold leading-[14px] tracking-[0px] text-white">side -X</span>
      </div>
    </div>
  );
}

const Leaf = ({ k }: { k: number }) => <path d="M-8 1l7-4.500l5 2.500v4l-5 3z" fill={G} transform={`translate(${k} 0)`} />;

function Side() {
  return (
    <div className="flex w-[277px] shrink-0">
      <div className="flex w-[263px] shrink-0 flex-col">
        <div className="flex h-[24px] justify-end">
          <Ic x={1198} w={66} y={245} h={24}>
            <path d="M1205.500 253.500h7v-2l-3.500-2.500l-3.500 2.500z" fill="#7cb342" /><path d="M1202 258l5 3l-2 2h-3z" fill="#4a80e8" /><path d="M1216 258l-5 3l2 2h3z" fill="#d94b45" /><path d="M1209 255v5l-2.500 2M1209 260l2.500 2" stroke="#ccc" strokeWidth={1.500} fill="none" />
            <path d="M1227 261a5.200 5.200 0 1 1 6.500 0" fill="none" stroke={T} strokeWidth={4} /><path d="M1233.500 261.500a5 5 0 0 0 2-4" fill="none" stroke="#888" strokeWidth={3} /><path d="M1229 257h4" stroke={T} strokeWidth={1.600} />
            <path d="M1245.500 249v13.500h12" fill="none" stroke="#888" strokeWidth={1.200} /><path d="M1247 260l8-8" stroke={T} strokeWidth={1.800} /><path d="M1251 250h6v6z" fill={T} />
          </Ic>
        </div>
        <div className="flex h-[20px] items-start pl-[12px] leading-[18px]">
          <span className="w-[64px]">Channels</span><span className="w-[36px]">Edit</span><span className="w-[50px]">Object</span><span>Show</span>
        </div>
        <div className="ml-[5px] h-[198px] w-[254px] shrink-0 bg-[#2b2b2b]" />
        <div className="flex h-[12px] justify-center pr-[1px] pt-[3px]"><div className="h-[1px] w-[86px] bg-[repeating-linear-gradient(90deg,#999_0_1px,transparent_1px_3px)]" /></div>
        <div className="ml-[4px] flex h-[182px] w-[257px] shrink-0 flex-col border border-t-0 border-[#303030]">
          <div className="flex h-[18px] items-end bg-[#383838] tracking-[0.15px]">
            <div className="ml-[1px] h-[16px] w-[60px] rounded-t-[2px] bg-[#444] pl-[10px] leading-[16px] text-white">Display</div>
            <div className="ml-[2px] h-[16px] w-[50px] rounded-t-[3px] border border-b-0 border-[#2c2c2c] bg-[#3b3b3b] pl-[10px] leading-[14px] text-[#999]">Anim</div>
          </div>
          <div className="flex h-[22px] pl-[10px] leading-[22px]">
            <span className="w-[49px]">Layers</span><span className="w-[57px]">Options</span><span>Help</span>
          </div>
          <div className="flex h-[25px] justify-end pr-[5px]">
            <C w={24} h={25} dy={-3}><Leaf k={0.500} /><path d="M4.500-5l4 4h-2.500v5h-3v-5h-2.500z" fill={T} stroke="#444" strokeWidth={0.500} /></C>
            <C w={25} h={25} dy={-3}><Leaf k={-0.500} /><path d="M4 5l4-4h-2.500v-5h-3v5h-2.500z" fill={T} stroke="#444" strokeWidth={0.500} /></C>
            <C w={26} h={25} dy={-3}><Leaf k={0} /><path d="M3.500-7h2v2.500h2.500v2h-2.500v2.500h-2v-2.500h-2.500v-2h2.500z" fill={T} /></C>
            <C w={22} h={25} dy={-3}><Leaf k={-0.500} /><circle cx={3} cy={-3} r={3.200} fill={T} /></C>
          </div>
          <div className="ml-[3px] h-[101px] w-[247px] shrink-0 bg-[#2b2b2b]" />
          <div className="ml-[3px] flex h-[12px] w-[247px] shrink-0 items-center bg-[#353535]">
            <C w={12} h={12}><path d="M2-4.500v9l-5-4.500z" fill={G} /></C>
            <div className="h-[9px] w-[154px] rounded-full bg-[#5d5d5d]" />
            <div className="grow" />
            <C w={13} h={12}><path d="M-2.500-4.500v9l5-4.500z" fill={G} /></C>
          </div>
        </div>
      </div>
      <div className="flex w-[14px] shrink-0 flex-col overflow-hidden bg-[#373737] tracking-[0.2px] text-[#969696]">
        <div className="h-[166px] w-[14px] whitespace-nowrap bg-[#444] pt-[13px] leading-[11px] text-[#e0e0e0] [writing-mode:vertical-rl]">Channel Box / Layer Editor</div>
        <div className="h-[116px] w-[14px] whitespace-nowrap border-b border-t border-[#2a2a2a] pt-[12px] leading-[11px] [writing-mode:vertical-rl]">Modeling Toolkit</div>
        <div className="mt-[2px] h-[104px] w-[14px] whitespace-nowrap border-b border-t border-[#2a2a2a] pt-[9px] leading-[11px] tracking-[0.15px] [writing-mode:vertical-rl]">Attribute Editor</div>
      </div>
    </div>
  );
}

const field = "flex h-[23px] w-[88px] shrink-0 items-center rounded-[2px] bg-[#2b2b2b] pl-[5px] pt-[2px] font-['DejaVu_Sans'] text-[10.5px] tracking-normal";

function RangeRow() {
  const p = { y: 687, h: 33 };
  return (
    <div className="flex h-[33px] shrink-0 items-center">
      <Grip cls="h-[29px]" />
      <div className={"ml-[5px] " + field}>1</div>
      <div className={"ml-[8px] " + field}>1</div>
      <div className="ml-[7px] flex h-[24px] w-[476px] shrink-0 items-center bg-[#373737] pl-[3px]">
        <div className="flex h-[18px] w-[246px] items-center justify-between rounded-[2px] bg-[#5d5d5d] px-[4px] font-['DejaVu_Sans'] text-[10.5px] tracking-normal">
          <span className="flex items-center gap-[4px]"><span className="h-[12px] w-[12px] rounded-[3px] bg-[#8e8e8e]" /><span className="pt-[2px]">1</span></span>
          <span className="flex items-center gap-[4px]"><span className="pt-[2px]">30</span><span className="h-[12px] w-[12px] rounded-[3px] bg-[#8e8e8e]" /></span>
        </div>
      </div>
      <div className={"ml-[7px] " + field}>30</div>
      <div className={"ml-[8px] " + field}>60</div>
      <Ic x={872} w={37} {...p}><Bar x={877.500} cy={703} /><path d="M893.500 700h8l-4 4z" fill="none" stroke="#999" /></Ic>
      <div className="flex h-[23px] w-[102px] shrink-0 items-center rounded-[2px] border border-[#363636] pl-[5px] pt-[2px]">No Anim Layer</div>
      <Ic x={1011} w={24} {...p}><Bar x={1021.500} cy={702} /></Ic>
      <div className="mb-[3px] flex h-[19px] w-[101px] shrink-0 items-center rounded-[2px] bg-[#5d5d5d] pl-[3px]">
        <span className="w-[77px]">30 fps</span><div className="h-full w-[2px] bg-[#505050]" />
        <C w={19} h={19}><Down x={0} y={-0.500} /></C>
      </div>
      <Ic x={1136} w={52} {...p}>
        <path d="M1151.500 703v-1.500a3.500 3.500 0 0 1 3.500-3.500h6M1164.500 701v1.500a3.500 3.500 0 0 1-3.500 3.500h-6" fill="none" stroke="#c4c4c4" strokeWidth={2.400} />
        <path d="M1161 693.500l6 4.500l-6 4.500zM1155 701.500l-6 4.500l6 4.500z" fill="#c4c4c4" />
        <Bar x={1180.500} cy={703} />
      </Ic>
      <Ic x={1188} w={88} {...p}>
        <path d="M1196.500 691.500h-5v21.500h5M1208 691.500h5.500v21.500h-5.500" fill="none" stroke="#3db33a" strokeWidth={1.100} />
        <path d="M1194 699h4l5-4.500v15l-5-4.500h-4z" fill={G} /><path d="M1205.500 699q2 3 0 6.500M1208 697q3 5 0 10.500" fill="none" stroke={G} strokeWidth={1.300} />
        <path d="M1224 699.500a7.500 7.500 0 0 1 13-2.500M1238.500 704a7.500 7.500 0 0 1-13.500 3M1223 702h5M1234 702h5" fill="none" stroke={G} strokeWidth={1.400} /><path d="M1234.500 697.500h4v-4zM1228 706h-4v4z" fill={G} /><path d="M1230 697h2.500v10h-2.500z" fill="#dc7f40" />
        <circle cx={1254.500} cy={697.500} r={3.300} fill="none" stroke={G} strokeWidth={1.300} /><circle cx={1254.500} cy={697.500} r={4.500} fill="none" stroke={G} strokeWidth={1.200} strokeDasharray="1.200 2.300" />
        <FaRunning x={1254} y={695} size={16} color="#dc7f40" />
      </Ic>
    </div>
  );
}

function DockItem({ children, dot = false }: { children: React.ReactNode; dot?: boolean }) {
  return (
    <svg className="w-[41.82px] shrink-0" height={51} viewBox="-21 -24 42 51">
      {children}
      {dot && <circle cx={0} cy={23} r={2} fill="#1b0708" />}
    </svg>
  );
}

const Kraken = () => (
  <g>
    <circle r={17} fill="#131722" stroke="#b9aeb5" strokeWidth={1.200} />
    <path d="M0-11c-6 0-8 6-4 10l1.500 4h5l1.500-4c4-4 2-10-4-10z" fill="#17a08c" />
    <path d="M-1.500 2v10M1.500 2v10M-4.500 3c-1 3-1 5 0 8M4.500 3c1 3 1 5 0 8M-8-5c-3 5-3 10 1 15M8-5c3 5 3 10-1 15M-12-6c-2 7 0 13 5 17M12-6c2 7 0 13-5 17" fill="none" stroke="#17a08c" strokeWidth={1.200} />
  </g>
);
const petals = ["#f39a2c", "#c9cf3a", "#66b74e", "#4fb0a0", "#5a8fd0", "#9b6fc0", "#e0607a", "#ef4a36"];
const Ps = ({ s }: { s: number }) => (
  <g transform={`scale(${s})`}><rect x={-16.500} y={-16} width={33} height={33} rx={6} fill="#041d33" /><text x={0} y={6.500} textAnchor="middle" fontSize={19} fontWeight={600} fontFamily="Open Sans" fill="#2fa6fb">Ps</text></g>
);

function Dock() {
  return (
    <div className="flex h-[51px] w-[1214px] shrink-0 rounded-t-[5px] bg-[linear-gradient(90deg,#937263_0,#82615a_7%,#7b5552_12%,#8d4f56_18%,#b0425a_23%,#bd4459_28%,#cb5360_34%,#c85563_38%,#b1525d_40%,#d25868_45%,#b5525d_50%,#bb5765_53%,#9b4852_57%,#8d4652_61%,#7f434e_66%,#8e4552_71%,#a84658_74%,#93505a_78%,#bd4c60_82%,#bb4459_87%,#85505a_91%,#8e6f6d_94%,#b39689_98%,#a38377_100%)] pl-[3px]">
      <DockItem dot>
        <rect x={-16} y={-15} width={32} height={31} fill="#17b4f4" /><path d="M2-15h14v31h-12c-2-4-2-8-1.500-11h-4c0-8 1.500-15 3.500-20z" fill="#eef2fa" />
        <path d="M2-15c-2 5-3.500 12-3.500 18h4c-.5 4-.3 9 1.500 13M-10 7c5 6 15 6 20 0M-7.500-7v4M7.500-7v4" fill="none" stroke="#183048" strokeWidth={1.300} />
      </DockItem>
      <DockItem><circle r={17} fill="#9fa5aa" stroke="#d8d8d8" strokeWidth={1.200} /><circle r={13} cy={2} fill="#8b9095" opacity={0.500} /><Rocket x={-11} y={-11} size={22} color="#3c4147" fill="#3c4147" /><circle cx={4} cy={-4} r={2} fill="#a8adb0" /></DockItem>
      <DockItem><circle r={17} fill="#1e8fe8" stroke="#dfe3e6" strokeWidth={1.800} /><circle r={14} fill="none" stroke="#8fd0fb" strokeWidth={1.500} strokeDasharray=".6 1.600" /><path d="M12-12L2.500 2.500L-2.500-2.500z" fill="#f0443c" /><path d="M-12 12L2.500 2.500L-2.500-2.500z" fill="#f2f2f2" /></DockItem>
      <DockItem><g transform="rotate(-7)"><rect x={-13} y={-16} width={26} height={33} fill="#f3f1ea" stroke="#f3f1ea" strokeWidth={1.500} strokeDasharray="1.500 1" /><rect x={-11} y={-14} width={22} height={29} fill="#3f86cc" /><path d="M-11 8l8-3l14 2v8h-22z" fill="#9cc3e4" /><path d="M-9-8c4 0 9 2 11 6l6 1l4 2l-3 2l-5 1l-1 4l-4-4l-5-1l3-2z" fill="#5b3a1e" /><path d="M-6-5l6 5M3 2l4 1" stroke="#c8a77a" strokeWidth={1.500} fill="none" /></g></DockItem>
      <DockItem><rect x={-16} y={-15} width={31} height={27} rx={4} fill="#1fdd66" /><rect x={-12} y={-8} width={15} height={13} rx={3} fill="#fff" /><path d="M4-2l6-5v11l-6-4z" fill="#fff" /><circle cx={9} cy={6} r={9} fill="#f3f3f3" /><path d="M4.500 2.500c0 5 4 9 8.500 9l1-2.500l-3-1.500l-1.500 1c-1.500-.8-2.300-1.700-3-3l1-1.500l-1.300-3z" fill="#1fcf5d" /></DockItem>
      <DockItem><g transform="rotate(-8)"><rect x={-15} y={-14} width={29} height={30} fill="#f5efe0" /><path d="M-12-14h9l6 12l11 5v-17z" fill="#a9d98a" /><path d="M-4-14l8 14l10 6M2-14l6 9l6 3" stroke="#fff" strokeWidth={2} fill="none" /><path d="M-11-14h5v28h-5z" fill="#4c93e0" /><path d="M-4 3l8 3l4 10h-12z" fill="#f6c952" /><path d="M-15 4h6v12h-6z" fill="#f3a7b8" /></g><circle cx={-7} cy={2} r={5} fill="#2b7de0" /><path d="M-7-2l3 6h-6z" fill="#fff" /><circle cx={10.500} cy={7} r={8.500} fill="#eceef2" stroke="#b8bcc4" strokeWidth={0.800} /><circle cx={10.500} cy={7} r={5.500} fill="#fff" stroke="#6d7684" strokeWidth={0.800} /><text x={10.500} y={9} textAnchor="middle" fontSize={5.500} fontWeight={700} fontFamily="Liberation Sans" fill="#555d6b">3D</text></DockItem>
      <DockItem><ellipse cx={-1} cy={-3} rx={16.500} ry={13.500} fill="#36a2f1" /><path d="M-11 5c1 4 0 7-3 9c4 0 8-1 10-4z" fill="#36a2f1" /><ellipse cx={7} cy={6} rx={10.500} ry={8.500} fill="#f6f9fc" /><path d="M10 12c0 2 1 4 4 4l-1-5z" fill="#f6f9fc" /><circle cx={2} cy={6} r={1.600} fill="#17578f" /><circle cx={7} cy={6} r={1.600} fill="#17578f" /><circle cx={12} cy={6} r={1.600} fill="#17578f" /></DockItem>
      <DockItem><g transform="rotate(-6)"><path d="M-13-13l27 0l2 28l-27 2z" fill="#505356" /><rect x={-14} y={-15} width={27} height={31} fill="#f6f6f6" /><rect x={-14} y={-15} width={27} height={9} fill="#e4453c" /><text x={-0.500} y={-8} textAnchor="middle" fontSize={7} fill="#fbdcd8" fontFamily="Liberation Sans">JUN</text><text x={-0.500} y={9} textAnchor="middle" fontSize={18} fill="#333" fontFamily="Inter">3</text></g></DockItem>
      <DockItem><circle r={17} fill="#f0eeee" />{petals.map((c, i) => <ellipse key={c} cx={0} cy={-8.500} rx={4.500} ry={6.500} fill={c} opacity={0.850} transform={`rotate(${i * 45})`} />)}</DockItem>
      <DockItem><g transform="rotate(-5)"><path d="M12-13h3v7h-3z" fill="#58b8d8" /><path d="M12-5h3v7h-3z" fill="#58c06a" /><path d="M12 3h3v8h-3z" fill="#e8a13a" /><path d="M10-15l2 3v27l-3 1z" fill="#eee" /><rect x={-15} y={-16} width={26} height={33} rx={2} fill="#aa7a4d" /><circle cx={-2} cy={-1} r={8} fill="none" stroke="#8a5e38" /><circle cx={-2} cy={-3} r={3} fill="#8a5e38" /><path d="M-7 4q5-5 10 0q-5 4-10 0z" fill="#8a5e38" /></g></DockItem>
      <DockItem><g transform="rotate(-6)"><rect x={-13} y={-15} width={28} height={33} rx={3} fill="#555" /><rect x={-14} y={-16} width={27} height={32} rx={3} fill="#fafafa" /><path d="M-4-9h14M-4-2h14M-4 4h14M-4 11h14" stroke="#ccc" strokeWidth={0.800} /><circle cx={-9} cy={-9} r={2.300} fill="#3a82f0" /><circle cx={-9} cy={-2.500} r={2.300} fill="#e8483c" /><circle cx={-9} cy={4} r={2.300} fill="#f09a38" /><circle cx={-9} cy={10.500} r={2.300} fill="#5a6068" /></g></DockItem>
      <DockItem><g transform="rotate(-5)"><rect x={-13} y={-15} width={27} height={32} fill="#f9f6ea" stroke="#c9a24f" strokeWidth={0.600} /><rect x={-13} y={-16} width={27} height={7} fill="#f7ca3e" /><path d="M-12-5h25M-12-1h25M-12 3h25M-12 7h25M-12 11h25" stroke="#ddd9cc" strokeWidth={0.800} /></g></DockItem>
      <DockItem dot><circle r={17} fill="#f0eff1" stroke="#d8c9cf" strokeWidth={0.800} /><path d="M-4-9l12-2.500v4l-12 2.500z" fill="#e8476b" /><path d="M-3.500-7v13M7.500-9v13" stroke="#8a6be0" strokeWidth={2} /><ellipse cx={-6} cy={7} rx={3.500} ry={3} fill="#8f6fe8" /><ellipse cx={5} cy={6} rx={3.500} ry={3} fill="#3fa4f0" /></DockItem>
      <DockItem><circle r={17} fill="#171718" /><FaApple x={-12} y={-7} size={11} color="#eee" /><text x={-1} y={4.500} fontSize={13} fontWeight={500} fontFamily="Inter" fill="#eee">tv</text></DockItem>
      <DockItem><circle r={17} fill="#eeeaec" /><path d="M-9-9h5.500L9 3.500v5.500h-5.500L-9-3.500z" fill="#f23b57" /><path d="M0-9h9v9zM-9 0v9h9z" fill="#f23b57" /></DockItem>
      <DockItem><circle r={17} fill="#a848d6" /><FaPodcast x={-12} y={-11} size={24} color="#f3e6fa" /></DockItem>
      <DockItem><circle r={17} fill="#1089f4" /><path d="M-6 9L3-9M6 9L-3-9M-11 4h13M7 4h4" stroke="#fff" strokeWidth={2.800} strokeLinecap="round" /></DockItem>
      <DockItem><rect x={-17} y={-16} width={34} height={32} rx={2} fill="#b3b8ba" /><circle r={14.500} cy={-0.500} fill="#55585a" /><circle r={12} cy={-0.500} fill="none" stroke="#222" strokeWidth={3.500} strokeDasharray="1.500 1" /><circle r={9} cy={-0.500} fill="#4a4a4a" stroke="#b0b0ac" strokeWidth={2} /><path d="M0-1l-4-8M0-1h9M0-1l-4 8" stroke="#c4c4c0" strokeWidth={2.500} /><circle r={2.500} cy={-0.500} fill="#c4c4c0" /></DockItem>
      <C w={18.200} h={51}><rect x={0} y={-18} width={1} height={36} fill="#63131f" /></C>
      <DockItem dot><Kraken /></DockItem>
      <DockItem dot><path d="M0-15L14-7V-1.500L2-8L-4-5.500L14 4V10.500L0 17.500L-14 11V5L-1 11.500L5 8.500L-14-1V-7.500z" fill="#ee4638" /><circle cx={-13} cy={-14} r={6} fill="#0c9df4" /></DockItem>
      <DockItem dot><rect x={-16} y={-16} width={32} height={32} rx={6} fill="#f5f3f0" /><circle r={13.500} fill="#f7c33c" /><path d="M-11.700-6.800A13.500 13.500 0 0 1 11.700-6.800L0-6.500A6.500 6.500 0 0 0-5.800 3.200z" fill="#e5443a" /><path d="M-11.700-6.800A13.500 13.500 0 0 0-1 13.500L5.600 3.300A6.500 6.500 0 0 1-5.800 3.200z" fill="#3ba457" /><circle r={6.800} fill="#fff" /><circle r={5.300} fill="#3b7de9" /></DockItem>
      <DockItem dot><rect x={-17} y={-15} width={34} height={30} rx={1.500} fill="#1c1c1c" stroke="#aaa5a5" strokeWidth={1.500} /><text x={-13} y={-5} fontSize={8.500} fontWeight={700} fontFamily="Liberation Mono" fill="#eee">&gt;_</text></DockItem>
      <DockItem dot><Ps s={1} /></DockItem>
      <DockItem dot><rect x={-20} y={-20} width={40} height={39} fill="#cfe2e1" /><path d="M-14-15h9l8 18l-4 6l-6-9v9l-7 1z" fill="#177d80" /><path d="M14-15h-8l-9 20l2 4l6-8v8l9 1z" fill="#2aa6a4" /><path d="M-14-15h8l6 14l-3 8z" fill="#57bcb8" /><text x={6} y={16.500} fontSize={7.500} fontFamily="Open Sans" fontWeight={600} fill="#1f8a8c">LT</text></DockItem>
      <C w={19.200} h={51}><rect x={0} y={-18} width={1} height={36} fill="#63131f" /></C>
      <DockItem><path d="M-12-19h18l7 9v28h-25z" fill="#f5f5f5" /><path d="M6-19v9h7z" fill="#c9c9c9" /><path d="M-8-19h13v5h-13z" fill="#666" /><path d="M-6-4h12l2 12h-16z" fill="#a5a9ad" /><path d="M-8 8h16v4h-16z" fill="#6f7377" /></DockItem>
      <DockItem><rect x={-19} y={-11} width={38} height={21} fill="#4b4949" /><rect x={-13} y={-8} width={20} height={12} fill="#f8f8f8" /><rect x={10} y={-8} width={7} height={3} fill="#3fc13f" /><path d="M-19-10h38" stroke="#777" /><g transform="translate(12 12)"><Ps s={0.380} /></g></DockItem>
      <DockItem><rect x={-19} y={-13} width={38} height={26} fill="#23262f" /><path d="M-17-9h10M-17-6h8M-17-3h9M-4-9v10M9-6h8M9-3h8M9 2h8M-2-8h8" stroke="#46618a" strokeWidth={1} /><g transform="translate(12 12) scale(.38)"><Kraken /></g></DockItem>
      <DockItem><path d="M-13-14h27l-3 29q-1 3-4 3h-13q-3 0-4-3z" fill="#d8d5d3" /><path d="M-8-10l2 26M-2-10l1 27M4-10l-1 27M9-10l-2 26" stroke="#f3f2f1" strokeWidth={2} /><ellipse cx={0.500} cy={-14} rx={13.500} ry={4} fill="#f0efee" /><path d="M-9-15l5-2l3 3l5-3l6 3l-5 2l-10-1z" fill="#7d7267" /><path d="M-4-17l3 2M5-15l3-1" stroke="#3a8ea8" strokeWidth={2} /></DockItem>
    </div>
  );
}

export default function App() {
  return (
    <div className="flex h-[800px] w-[1280px] flex-col overflow-hidden bg-[#1c0f10]">
      <MacBar />
      <div className="h-[1px] shrink-0 bg-[#2b1b17]" />
      <div className="flex h-[723px] shrink-0 flex-col overflow-hidden rounded-[5px] border-b border-[#8a8a8a] bg-[#444] font-['Noto_Sans'] text-[11px] tracking-[0.15px] text-[#c8c8c8]">
        <TitleBar />
        <MenuRow />
        <TimeRow />
        <Rule />
        <MelRow />
        <Rule />
        <StatusRow />
        <Rule />
        <Shelf />
        <Rule />
        <div className="flex h-[440px] shrink-0">
          <Tools />
          <div className="w-[2px] shrink-0 bg-[#383838]" />
          <Viewport />
          <div className="ml-[3px] w-[2px] shrink-0 bg-[#383838]" />
          <Side />
        </div>
        <Rule />
        <RangeRow />
        <Rule />
        <div className="flex h-[23px] shrink-0 items-center">
          <Grip cls="h-[20px]" />
          <span className="ml-[15px] whitespace-nowrap pt-[2px] text-[10.5px] tracking-[-0.02px] text-[#b8b8b8]">Track Tool: Use LMB or MMB to track. Shift to constrain translation.</span>
        </div>
      </div>
      <div className="flex h-[54px] shrink-0 items-end bg-[linear-gradient(90deg,#4a302a_0,#2a1917_3%,#2a1015_30%,#8a1830_45%,#15090d_60%,#7d1b30_80%,#8d7268_97%,#9a857c_100%)] pl-[33px]">
        <Dock />
      </div>
    </div>
  );
}
